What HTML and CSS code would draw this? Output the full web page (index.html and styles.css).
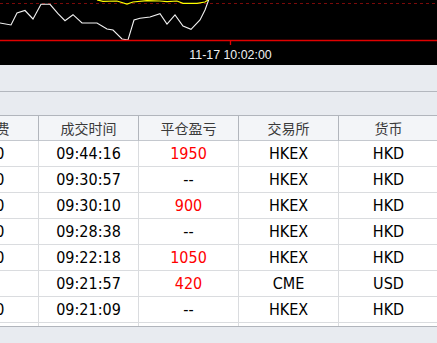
FILE: index.html
```html
<!DOCTYPE html>
<html lang="zh-CN">
<head>
<meta charset="utf-8">
<title>成交记录</title>
<link rel="stylesheet" href="styles.css">
</head>
<body>
<div class="chart">
  <svg class="chart-svg" width="437" height="65" viewBox="0 0 437 65">
    <line x1="0" y1="3.5" x2="437" y2="3.5" class="dash"/>
    <polyline class="yellow" points="97,0 103,1.3 117,1 127,4 133,2 147,0.7 160,1 167,1.7 177,1 183,3.3 197,3.3 205,2 208,0"/>
    <polyline class="white" points="0,23 11,25 17,13 25,10.5 33,19 41,4.3 50,4.3 58,13.7 65,20.7 73,14.7 82,23 97,23 107,29 113,30 122,39 128,40 134,20 140,18.3 150,17 160,13.7 167,24 175,15 183,26 191,29.3 200,20 205,10 209,-1"/>
    <line x1="0" y1="40.5" x2="437" y2="40.5" class="base"/>
    <line x1="230.5" y1="41" x2="230.5" y2="45" class="base"/>
    <text x="230.5" y="59" class="time">11-17 10:02:00</text>
  </svg>
</div>
<div class="tabbar"></div>
<div class="toolbar"></div>
<div class="grid">
  <div class="grid-inner">
    <div class="row head">
      <div class="cell">手续费</div>
      <div class="cell">成交时间</div>
      <div class="cell">平仓盈亏</div>
      <div class="cell">交易所</div>
      <div class="cell">货币</div>
    </div>
    <div class="body">
      <div class="row"><div class="cell">30.0</div><div class="cell">09:44:16</div><div class="cell up">1950</div><div class="cell">HKEX</div><div class="cell">HKD</div></div>
      <div class="row"><div class="cell">30.0</div><div class="cell">09:30:57</div><div class="cell">--</div><div class="cell">HKEX</div><div class="cell">HKD</div></div>
      <div class="row"><div class="cell">30.0</div><div class="cell">09:30:10</div><div class="cell up">900</div><div class="cell">HKEX</div><div class="cell">HKD</div></div>
      <div class="row"><div class="cell">30.0</div><div class="cell">09:28:38</div><div class="cell">--</div><div class="cell">HKEX</div><div class="cell">HKD</div></div>
      <div class="row"><div class="cell">30.0</div><div class="cell">09:22:18</div><div class="cell up">1050</div><div class="cell">HKEX</div><div class="cell">HKD</div></div>
      <div class="row"><div class="cell">4.8</div><div class="cell">09:21:57</div><div class="cell up">420</div><div class="cell">CME</div><div class="cell">USD</div></div>
      <div class="row"><div class="cell">30.0</div><div class="cell">09:21:09</div><div class="cell">--</div><div class="cell">HKEX</div><div class="cell">HKD</div></div>
      <div class="row"><div class="cell">30.0</div><div class="cell">09:20:45</div><div class="cell">--</div><div class="cell">HKEX</div><div class="cell">HKD</div></div>
    </div>
  </div>
</div>
</body>
</html>
```
FILE: styles.css
```css
html, body {
  margin: 0;
  padding: 0;
}
body {
  width: 437px;
  height: 343px;
  overflow: hidden;
  background: #e8ebf0;
  font-family: "DejaVu Sans Condensed", "DejaVu Sans", sans-serif;
  font-stretch: condensed;
}
.chart {
  height: 65px;
  background: #000;
}
.chart-svg {
  display: block;
}
.dash {
  stroke: #7a0a0a;
  stroke-width: 1;
  stroke-dasharray: 3 3;
}
.yellow {
  fill: none;
  stroke: #ffff00;
  stroke-width: 1.2;
}
.white {
  fill: none;
  stroke: #f2f2f2;
  stroke-width: 1.1;
}
.base {
  stroke: #e00000;
  stroke-width: 1.3;
}
.time {
  fill: #f0f0f0;
  font-family: "Liberation Sans", Arial, sans-serif;
  font-stretch: normal;
  font-size: 12.4px;
  text-anchor: middle;
}
.tabbar {
  height: 26px;
  border-bottom: 1px solid #b3b7be;
}
.toolbar {
  height: 23px;
}
.grid {
  width: 437px;
  overflow: hidden;
}
.grid-inner {
  margin-left: -61px;
  width: 500px;
}
.row {
  display: grid;
  grid-template-columns: repeat(5, 100px);
}
.cell {
  box-sizing: border-box;
  height: 26px;
  line-height: 25px;
  border-right: 1px solid #dadcdf;
  border-bottom: 1px solid #dadcdf;
  text-align: center;
  font-size: 16px;
  color: #000;
  white-space: nowrap;
  background: #fff;
}
.head {
  border-top: 1px solid #b1b5bc;
}
.head .cell {
  height: 25px;
  line-height: 24px;
  background: #f3f5f8;
  border-right-color: #b1b5bc;
  border-bottom-color: #c4c8ce;
  font-family: "Noto Sans CJK SC", sans-serif;
  font-stretch: normal;
  font-size: 14px;
  color: #3a3a3a;
}
.body {
  height: 185px;
  overflow: hidden;
  border-bottom: 1px solid #b1b5bc;
}
.up {
  color: #ff0000;
}
```
